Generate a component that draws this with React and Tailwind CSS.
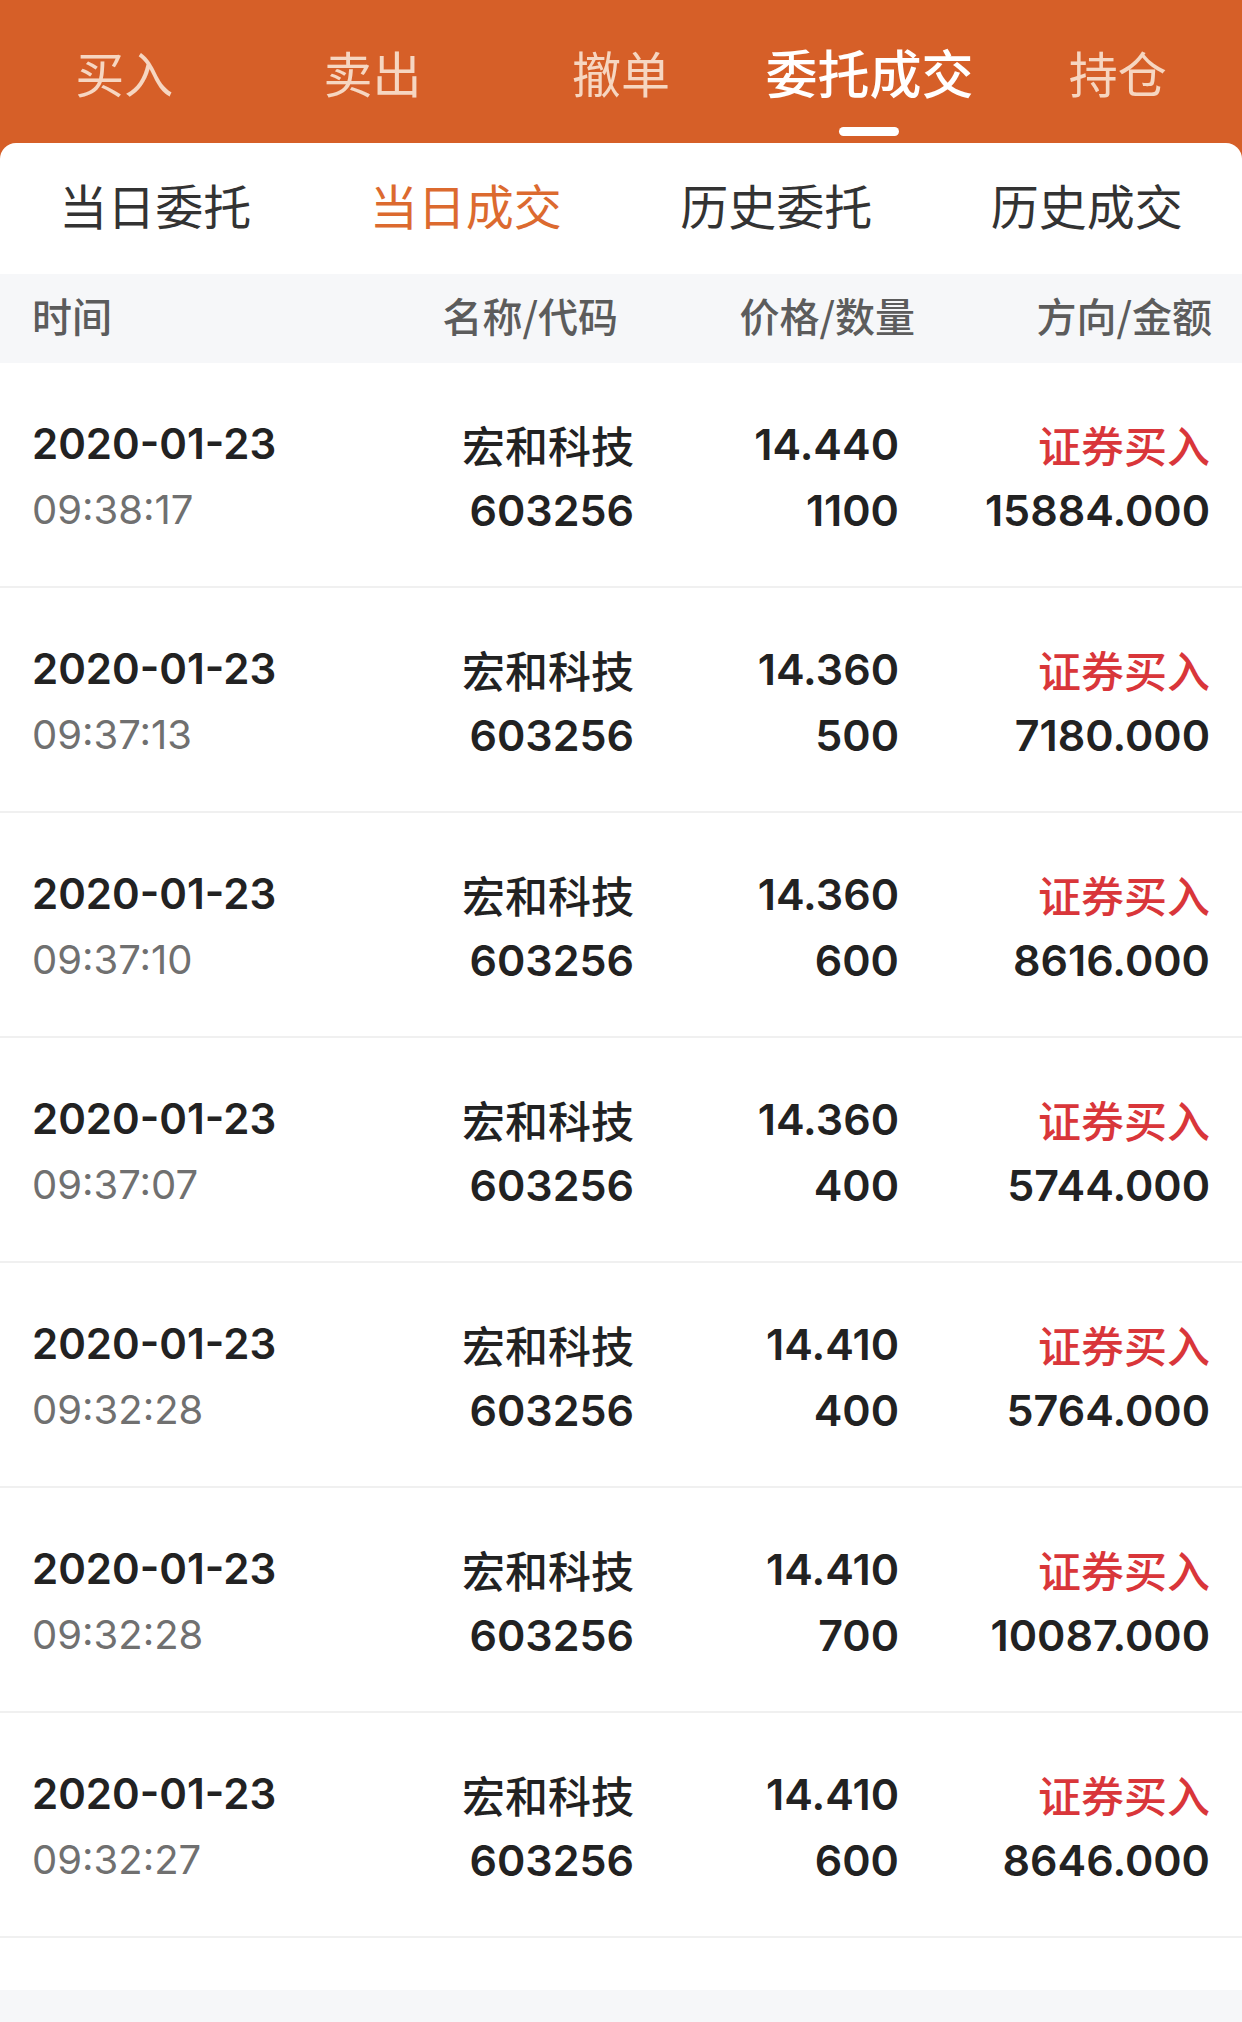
const mainTabs = ['买入', '卖出', '撤单', '委托成交', '持仓'];
const subTabs = ['当日委托', '当日成交', '历史委托', '历史成交'];

const trades = [
  { time: '09:38:17', price: '14.440', qty: '1100', amount: '15884.000' },
  { time: '09:37:13', price: '14.360', qty: '500', amount: '7180.000' },
  { time: '09:37:10', price: '14.360', qty: '600', amount: '8616.000' },
  { time: '09:37:07', price: '14.360', qty: '400', amount: '5744.000' },
  { time: '09:32:28', price: '14.410', qty: '400', amount: '5764.000' },
  { time: '09:32:28', price: '14.410', qty: '700', amount: '10087.000' },
  { time: '09:32:27', price: '14.410', qty: '600', amount: '8646.000' },
];

const cjk = "font-['Noto_Sans_CJK_SC',sans-serif]";
const num = "font-['Inter','Noto_Sans_CJK_SC',sans-serif]";

function TradeRow({ t }) {
  return (
    <div className="grid h-[225px] grid-cols-[1fr_300px_265px_311px] border-b-2 border-[#f0f0f0] px-[32px] pt-[4px]">
      <div className="flex flex-col justify-center">
        <div className={`${num} text-[42px] font-semibold leading-[66px] text-[#222]`}>2020-01-23</div>
        <div className={`${num} text-[40px] leading-[66px] text-[#707070]`}>{t.time}</div>
      </div>
      <div className="flex flex-col items-end justify-center">
        <div className={`${cjk} text-[43px] font-medium leading-[66px] text-[#222]`}>宏和科技</div>
        <div className={`${num} text-[43px] font-semibold leading-[66px] text-[#222]`}>603256</div>
      </div>
      <div className="flex flex-col items-end justify-center">
        <div className={`${num} text-[43px] font-semibold leading-[66px] text-[#222]`}>{t.price}</div>
        <div className={`${num} text-[43px] font-semibold leading-[66px] text-[#222]`}>{t.qty}</div>
      </div>
      <div className="flex flex-col items-end justify-center">
        <div className={`${cjk} text-[43px] font-medium leading-[66px] text-[#d9363a]`}>证券买入</div>
        <div className={`${num} text-[43px] font-semibold leading-[66px] text-[#222]`}>{t.amount}</div>
      </div>
    </div>
  );
}

export default function App() {
  return (
    <div className="min-h-screen w-[1242px] bg-[#f6f7f9]">
      <div className="bg-[#d65f28]">
        <nav className="grid h-[143px] grid-cols-5">
          {mainTabs.map((tab) => {
            const active = tab === '委托成交';
            return (
              <div key={tab} className="flex flex-col items-center pt-[47px]">
                <span
                  className={`${cjk} leading-[50px] ${
                    active ? 'text-[52px] font-medium text-white' : 'text-[49px] text-[#f6d6c1]'
                  }`}
                >
                  {tab}
                </span>
                {active && <span className="mt-[30px] h-[9px] w-[60px] rounded-full bg-white" />}
              </div>
            );
          })}
        </nav>
        <div className="rounded-t-[16px] bg-white">
          <div className="grid h-[131px] grid-cols-4 items-center pb-[10px]">
            {subTabs.map((tab) => (
              <div
                key={tab}
                className={`${cjk} text-center text-[48px] leading-[52px] ${
                  tab === '当日成交' ? 'text-[#dc6a2f]' : 'text-[#333]'
                }`}
              >
                {tab}
              </div>
            ))}
          </div>
        </div>
      </div>
      <div className="bg-white pb-[52px]">
        <div
          className={`${cjk} grid h-[89px] grid-cols-[1fr_284px_297px_297px] items-center bg-[#f6f7f9] pb-[7px] pl-[32px] pr-[30px] text-[40px] font-medium text-[#5c5c5c]`}
        >
          <span>时间</span>
          <span className="text-right">名称/代码</span>
          <span className="text-right">价格/数量</span>
          <span className="text-right">方向/金额</span>
        </div>
        {trades.map((t, i) => (
          <TradeRow key={i} t={t} />
        ))}
      </div>
    </div>
  );
}
